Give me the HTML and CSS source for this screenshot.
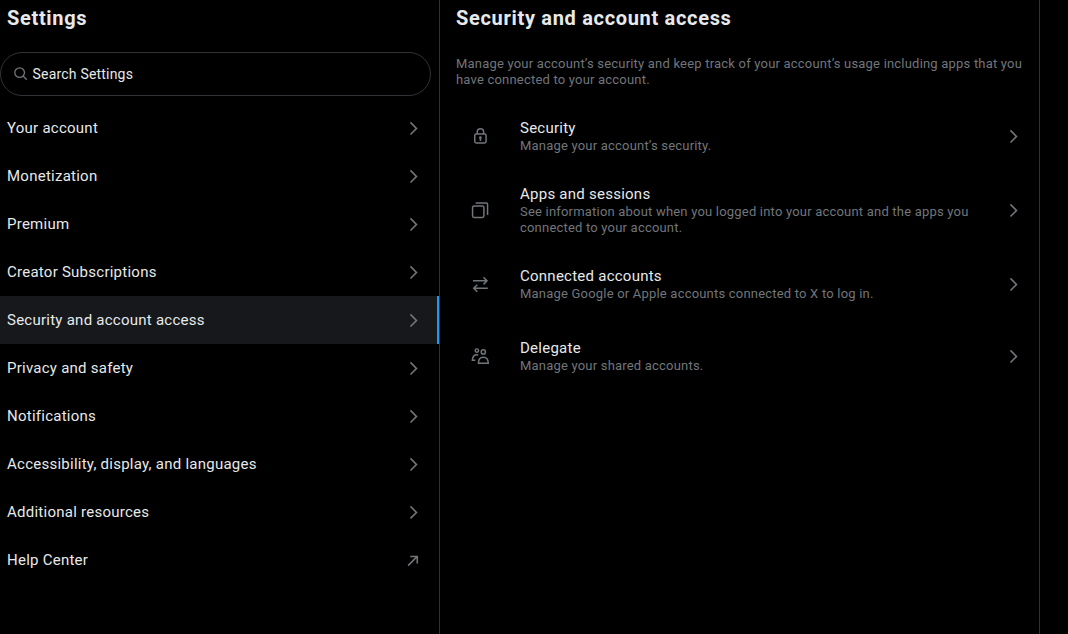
FILE: index.html
```html
<!DOCTYPE html>
<html lang="en">
<head>
<meta charset="utf-8">
<title>Settings</title>
<link rel="stylesheet" href="styles.css">
</head>
<body>
<svg class="defs" width="0" height="0">
  <symbol id="chevron" viewBox="0 0 24 24"><path d="M14.586 12L7.543 4.96l1.414-1.42L17.414 12l-8.457 8.46-1.414-1.42L14.586 12z"/></symbol>
  <symbol id="external" viewBox="0 0 24 24"><path d="M8 6h10v10h-2V9.41L5.957 19.46l-1.42-1.42L14.586 8H8V6z"/></symbol>
</svg>
<div class="layout">
  <nav class="sidebar">
    <h1 class="heading heading-settings">Settings</h1>
    <div class="search">
      <svg class="search-icon" viewBox="0 0 24 24"><circle cx="10.25" cy="10.25" r="7.5"/><path d="M15.6 15.6l5.7 5.7"/></svg>
      <span class="search-label">Search Settings</span>
    </div>
    <div class="menu">
      <a class="item"><span>Your account</span><svg class="arrow"><use href="#chevron"/></svg></a>
      <a class="item"><span>Monetization</span><svg class="arrow"><use href="#chevron"/></svg></a>
      <a class="item"><span>Premium</span><svg class="arrow"><use href="#chevron"/></svg></a>
      <a class="item"><span>Creator Subscriptions</span><svg class="arrow"><use href="#chevron"/></svg></a>
      <a class="item active"><span>Security and account access</span><svg class="arrow"><use href="#chevron"/></svg></a>
      <a class="item"><span>Privacy and safety</span><svg class="arrow"><use href="#chevron"/></svg></a>
      <a class="item"><span>Notifications</span><svg class="arrow"><use href="#chevron"/></svg></a>
      <a class="item"><span>Accessibility, display, and languages</span><svg class="arrow"><use href="#chevron"/></svg></a>
      <a class="item"><span>Additional resources</span><svg class="arrow"><use href="#chevron"/></svg></a>
      <a class="item"><span>Help Center</span><svg class="arrow"><use href="#external"/></svg></a>
    </div>
  </nav>
  <main class="detail">
    <h2 class="heading">Security and account access</h2>
    <p class="intro">Manage your account’s security and keep track of your account’s usage including apps that you<br>have connected to your account.</p>
    <a class="row">
      <svg class="icon" viewBox="0 0 24 24"><rect x="4.800" y="9" width="14.500" height="11.500" rx="1.800"/><path d="M8 9V6.500c0-2.400 1.600-4.200 4.100-4.200s4.100 1.800 4.100 4.200V9M12.050 13.500v4.300"/><circle class="solid" cx="12.050" cy="13.700" r="1.800"/></svg>
      <div class="text"><div class="title">Security</div><div class="sub">Manage your account’s security.</div></div>
      <svg class="arrow"><use href="#chevron"/></svg>
    </a>
    <a class="row">
      <svg class="icon" viewBox="0 0 24 24"><rect x="2" y="6.500" width="14.500" height="14.500" rx="1.800"/><path d="M6 2.500h13.500c1 0 1.700.7 1.700 1.700V18"/></svg>
      <div class="text"><div class="title">Apps and sessions</div><div class="sub">See information about when you logged into your account and the apps you<br>connected to your account.</div></div>
      <svg class="arrow"><use href="#chevron"/></svg>
    </a>
    <a class="row">
      <svg class="icon" viewBox="0 0 24 24"><path d="M2.500 7.500H20M16 3l4.500 4.500L16 12M21.500 17H4M8 12.500L3.500 17 8 21.500"/></svg>
      <div class="text"><div class="title">Connected accounts</div><div class="sub">Manage Google or Apple accounts connected to X to log in.</div></div>
      <svg class="arrow"><use href="#chevron"/></svg>
    </a>
    <a class="row">
      <svg class="icon" viewBox="0 0 24 24"><circle cx="7.500" cy="4.500" r="2.100"/><circle cx="15.800" cy="6.300" r="2.700"/><path d="M9.500 20.700c0-4.900 2.300-7.700 6.300-7.700s6.300 2.800 6.300 7.700zM9.300 10.300C4.900 8.700 1.900 11.500 1.700 17H5.500"/></svg>
      <div class="text"><div class="title">Delegate</div><div class="sub">Manage your shared accounts.</div></div>
      <svg class="arrow"><use href="#chevron"/></svg>
    </a>
  </main>
</div>
</body>
</html>
```
FILE: styles.css
```css
* { box-sizing: border-box; }
body {
  margin: 0;
  background: #000;
  color: #e7e9ea;
  font-family: Roboto, "Liberation Sans", sans-serif;
  font-size: 15px;
  line-height: 20px;
  overflow: hidden;
}
.defs { display: block; }
.layout { display: flex; height: 634px; }
.sidebar { width: 440px; border-right: 1px solid #2f3336; }
.detail { width: 600px; border-right: 1px solid #2f3336; }
.heading {
  margin: 0;
  padding: 6px 16px 0;
  height: 52px;
  font-size: 20px;
  line-height: 24px;
  font-weight: 700;
  letter-spacing: 0.680px;
}
.heading-settings { padding-left: 7px; }
.search {
  display: flex;
  align-items: center;
  gap: 4px;
  width: 431px;
  height: 44px;
  padding-left: 12px;
  border: 1px solid #2f3336;
  border-radius: 22px;
}
.search-icon { width: 15.500px; height: 15.500px; fill: none; stroke: #71767b; stroke-width: 2; }
.item, .title { letter-spacing: 0.250px; }
.search-label { font-size: 14px; letter-spacing: 0.200px; }
.menu { padding-top: 8px; }
.item {
  display: flex;
  align-items: center;
  justify-content: space-between;
  height: 48px;
  padding: 0 16px 0 7px;
}
.item.active { background: #16181c; border-right: 2px solid #1d9bf0; padding-right: 14px; }
.arrow { width: 18.750px; height: 18.750px; fill: #71767b; flex: none; }
.intro, .sub { color: #71767b; font-size: 13px; line-height: 16px; letter-spacing: 0.200px; }
.intro { margin: 0; padding: 4px 16px 0; height: 48px; }
.row {
  display: flex;
  align-items: center;
  min-height: 72px;
  padding: 12px 16px;
}
.icon {
  width: 18.750px;
  height: 18.750px;
  margin: 0 30.250px 0 15px;
  flex: none;
  fill: none;
  stroke: #71767b;
  stroke-width: 1.900;
}
.icon .solid { fill: #71767b; stroke: none; }
.text { flex: 1; white-space: nowrap; }
```
